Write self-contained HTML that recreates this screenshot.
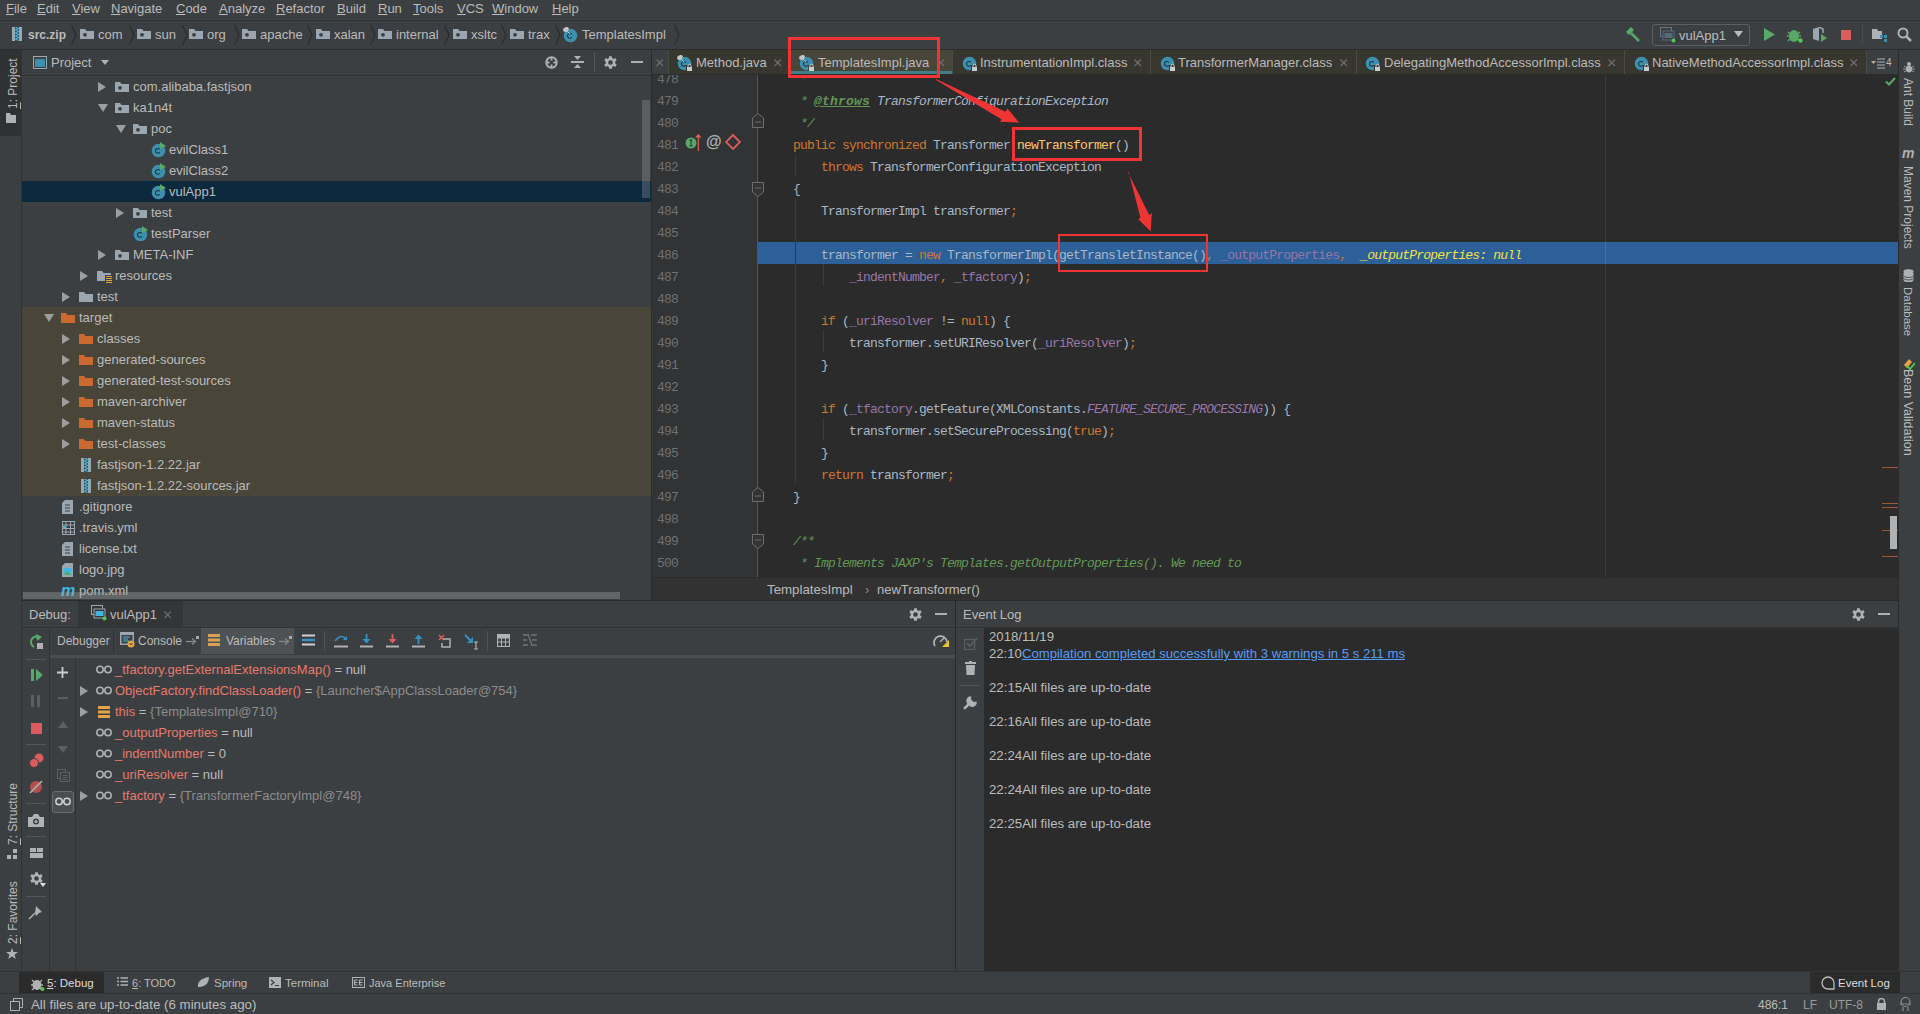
<!DOCTYPE html><html><head><meta charset="utf-8"><style>
html,body{margin:0;padding:0;}
body{width:1920px;height:1014px;overflow:hidden;position:relative;background:#3C3F41;font-family:"Liberation Sans",sans-serif;}
.t{position:absolute;white-space:pre;font-family:"Liberation Sans",sans-serif;}
.m{position:absolute;white-space:pre;font-family:"Liberation Mono",monospace;font-size:13px;letter-spacing:-0.8px;line-height:22px;color:#A9B7C6;}
.u{text-decoration:underline;}
</style></head><body>
<div style="position:absolute;left:0px;top:0px;width:1920px;height:20px;background:#3C3F41;"></div>
<div style="position:absolute;left:0px;top:20px;width:1920px;height:1px;background:#323232;"></div>
<div class="t" style="left:6px;top:1.0px;color:#BBBBBB;font-size:13px;line-height:16px;"><span class="u">F</span>ile</div>
<div class="t" style="left:37px;top:1.0px;color:#BBBBBB;font-size:13px;line-height:16px;"><span class="u">E</span>dit</div>
<div class="t" style="left:72px;top:1.0px;color:#BBBBBB;font-size:13px;line-height:16px;"><span class="u">V</span>iew</div>
<div class="t" style="left:111px;top:1.0px;color:#BBBBBB;font-size:13px;line-height:16px;"><span class="u">N</span>avigate</div>
<div class="t" style="left:176px;top:1.0px;color:#BBBBBB;font-size:13px;line-height:16px;"><span class="u">C</span>ode</div>
<div class="t" style="left:219px;top:1.0px;color:#BBBBBB;font-size:13px;line-height:16px;"><span class="u">A</span>nalyze</div>
<div class="t" style="left:276px;top:1.0px;color:#BBBBBB;font-size:13px;line-height:16px;"><span class="u">R</span>efactor</div>
<div class="t" style="left:337px;top:1.0px;color:#BBBBBB;font-size:13px;line-height:16px;"><span class="u">B</span>uild</div>
<div class="t" style="left:378px;top:1.0px;color:#BBBBBB;font-size:13px;line-height:16px;"><span class="u">R</span>un</div>
<div class="t" style="left:413px;top:1.0px;color:#BBBBBB;font-size:13px;line-height:16px;"><span class="u">T</span>ools</div>
<div class="t" style="left:457px;top:1.0px;color:#BBBBBB;font-size:13px;line-height:16px;"><span class="u">V</span>CS</div>
<div class="t" style="left:492px;top:1.0px;color:#BBBBBB;font-size:13px;line-height:16px;"><span class="u">W</span>indow</div>
<div class="t" style="left:552px;top:1.0px;color:#BBBBBB;font-size:13px;line-height:16px;"><span class="u">H</span>elp</div>
<div style="position:absolute;left:0px;top:21px;width:1920px;height:28px;background:#3C3F41;"></div>
<div style="position:absolute;left:0px;top:49px;width:1920px;height:1px;background:#2B2B2B;"></div>
<svg style="position:absolute;left:12px;top:27px;" width="10" height="14" viewBox="0 0 10 14"><rect x="0" y="0" width="10" height="14" fill="#9AA7B0"/><rect x="3" y="0" width="4" height="14" fill="#3C3F41"/><path d="M3.5 0 L6.5 1.5 L3.5 3 L6.5 4.5 L3.5 6 L6.5 7.5 L3.5 9 L6.5 10.5 L3.5 12 L6.5 13.5" stroke="#40B6E0" stroke-width="1.2" fill="none"/></svg>
<div class="t" style="left:28px;top:27.0px;color:#BBBBBB;font-size:12px;line-height:16px;font-weight:bold;">src.zip</div>
<svg style="position:absolute;left:71px;top:25px;" width="6" height="20" viewBox="0 0 6 20"><path d="M0.5 0 L5 10 L0.5 20" stroke="#2B2B2B" stroke-width="1.2" fill="none"/></svg>
<svg style="position:absolute;left:129px;top:25px;" width="6" height="20" viewBox="0 0 6 20"><path d="M0.5 0 L5 10 L0.5 20" stroke="#2B2B2B" stroke-width="1.2" fill="none"/></svg>
<svg style="position:absolute;left:182px;top:25px;" width="6" height="20" viewBox="0 0 6 20"><path d="M0.5 0 L5 10 L0.5 20" stroke="#2B2B2B" stroke-width="1.2" fill="none"/></svg>
<svg style="position:absolute;left:234px;top:25px;" width="6" height="20" viewBox="0 0 6 20"><path d="M0.5 0 L5 10 L0.5 20" stroke="#2B2B2B" stroke-width="1.2" fill="none"/></svg>
<svg style="position:absolute;left:307px;top:25px;" width="6" height="20" viewBox="0 0 6 20"><path d="M0.5 0 L5 10 L0.5 20" stroke="#2B2B2B" stroke-width="1.2" fill="none"/></svg>
<svg style="position:absolute;left:370px;top:25px;" width="6" height="20" viewBox="0 0 6 20"><path d="M0.5 0 L5 10 L0.5 20" stroke="#2B2B2B" stroke-width="1.2" fill="none"/></svg>
<svg style="position:absolute;left:444px;top:25px;" width="6" height="20" viewBox="0 0 6 20"><path d="M0.5 0 L5 10 L0.5 20" stroke="#2B2B2B" stroke-width="1.2" fill="none"/></svg>
<svg style="position:absolute;left:501px;top:25px;" width="6" height="20" viewBox="0 0 6 20"><path d="M0.5 0 L5 10 L0.5 20" stroke="#2B2B2B" stroke-width="1.2" fill="none"/></svg>
<svg style="position:absolute;left:555px;top:25px;" width="6" height="20" viewBox="0 0 6 20"><path d="M0.5 0 L5 10 L0.5 20" stroke="#2B2B2B" stroke-width="1.2" fill="none"/></svg>
<svg style="position:absolute;left:674px;top:25px;" width="6" height="20" viewBox="0 0 6 20"><path d="M0.5 0 L5 10 L0.5 20" stroke="#2B2B2B" stroke-width="1.2" fill="none"/></svg>
<svg style="position:absolute;left:80px;top:28px;" width="14" height="11" viewBox="0 0 14 11"><path d="M0 1 H5 L6.5 3 H14 V11 H0 Z" fill="#9AA7B0"/><circle cx="5" cy="6.8" r="1.9" fill="#3C3F41"/></svg>
<div class="t" style="left:98px;top:27.0px;color:#BBBBBB;font-size:13px;line-height:16px;">com</div>
<svg style="position:absolute;left:137px;top:28px;" width="14" height="11" viewBox="0 0 14 11"><path d="M0 1 H5 L6.5 3 H14 V11 H0 Z" fill="#9AA7B0"/><circle cx="5" cy="6.8" r="1.9" fill="#3C3F41"/></svg>
<div class="t" style="left:155px;top:27.0px;color:#BBBBBB;font-size:13px;line-height:16px;">sun</div>
<svg style="position:absolute;left:189px;top:28px;" width="14" height="11" viewBox="0 0 14 11"><path d="M0 1 H5 L6.5 3 H14 V11 H0 Z" fill="#9AA7B0"/><circle cx="5" cy="6.8" r="1.9" fill="#3C3F41"/></svg>
<div class="t" style="left:207px;top:27.0px;color:#BBBBBB;font-size:13px;line-height:16px;">org</div>
<svg style="position:absolute;left:242px;top:28px;" width="14" height="11" viewBox="0 0 14 11"><path d="M0 1 H5 L6.5 3 H14 V11 H0 Z" fill="#9AA7B0"/><circle cx="5" cy="6.8" r="1.9" fill="#3C3F41"/></svg>
<div class="t" style="left:260px;top:27.0px;color:#BBBBBB;font-size:13px;line-height:16px;">apache</div>
<svg style="position:absolute;left:316px;top:28px;" width="14" height="11" viewBox="0 0 14 11"><path d="M0 1 H5 L6.5 3 H14 V11 H0 Z" fill="#9AA7B0"/><circle cx="5" cy="6.8" r="1.9" fill="#3C3F41"/></svg>
<div class="t" style="left:334px;top:27.0px;color:#BBBBBB;font-size:13px;line-height:16px;">xalan</div>
<svg style="position:absolute;left:378px;top:28px;" width="14" height="11" viewBox="0 0 14 11"><path d="M0 1 H5 L6.5 3 H14 V11 H0 Z" fill="#9AA7B0"/><circle cx="5" cy="6.8" r="1.9" fill="#3C3F41"/></svg>
<div class="t" style="left:396px;top:27.0px;color:#BBBBBB;font-size:13px;line-height:16px;">internal</div>
<svg style="position:absolute;left:453px;top:28px;" width="14" height="11" viewBox="0 0 14 11"><path d="M0 1 H5 L6.5 3 H14 V11 H0 Z" fill="#9AA7B0"/><circle cx="5" cy="6.8" r="1.9" fill="#3C3F41"/></svg>
<div class="t" style="left:471px;top:27.0px;color:#BBBBBB;font-size:13px;line-height:16px;">xsltc</div>
<svg style="position:absolute;left:510px;top:28px;" width="14" height="11" viewBox="0 0 14 11"><path d="M0 1 H5 L6.5 3 H14 V11 H0 Z" fill="#9AA7B0"/><circle cx="5" cy="6.8" r="1.9" fill="#3C3F41"/></svg>
<div class="t" style="left:528px;top:27.0px;color:#BBBBBB;font-size:13px;line-height:16px;">trax</div>
<svg style="position:absolute;left:563px;top:27px;" width="16" height="16" viewBox="0 0 16 16"><circle cx="7.5" cy="8.5" r="6.8" fill="#3D8FAE"/><path d="M8.8 7.4 A2.4 2.4 0 1 0 8.8 10.4" stroke="#1B3440" stroke-width="1.1" fill="none"/><ellipse cx="3" cy="2.5" rx="3" ry="2.2" fill="#C0C5C8" transform="rotate(-30 3 2.5)"/><path d="M4 4 L7 7" stroke="#C0C5C8" stroke-width="1"/></svg>
<div class="t" style="left:582px;top:27.0px;color:#BBBBBB;font-size:13px;line-height:16px;">TemplatesImpl</div>
<svg style="position:absolute;left:1625px;top:27px;" width="16" height="15" viewBox="0 0 16 15"><path d="M1 5 L6 0 L9 3 L4 8 Z" fill="#59A869"/><path d="M6 6 L14 14" stroke="#59A869" stroke-width="2.5"/></svg>
<div style="position:absolute;left:1652px;top:24px;width:96px;height:20px;border:1px solid #5E6060;border-radius:3px;"></div>
<svg style="position:absolute;left:1660px;top:27px;" width="16" height="16" viewBox="0 0 16 16"><rect x="0.5" y="0.5" width="11" height="9" fill="none" stroke="#6E7578"/><rect x="3" y="4" width="11" height="9" fill="#3C3F41" stroke="#4E6A80"/><rect x="4.5" y="6" width="8" height="5" fill="#56687A"/><circle cx="13.5" cy="13.5" r="2" fill="#4ECB4E"/></svg>
<div class="t" style="left:1679px;top:28.0px;color:#BBBBBB;font-size:13px;line-height:16px;">vulApp1</div>
<svg style="position:absolute;left:1734px;top:31px;" width="9" height="6" viewBox="0 0 9 6"><path d="M0 0 L9 0 L4.5 6 Z" fill="#BBBBBB"/></svg>
<svg style="position:absolute;left:1764px;top:28px;" width="11" height="13" viewBox="0 0 11 13"><path d="M0 0 L11 6.5 L0 13 Z" fill="#59A869"/></svg>
<svg style="position:absolute;left:1787px;top:27px;" width="16" height="16" viewBox="0 0 16 16"><ellipse cx="7" cy="9" rx="5" ry="6" fill="#59A869"/><path d="M1 5 L3 7 M13 5 L11 7 M0 9 H2 M12 9 H14 M1 14 L3 12 M13 14 L11 12" stroke="#59A869" stroke-width="1.5"/><circle cx="13.5" cy="13.5" r="2.2" fill="#4ECB4E"/></svg>
<svg style="position:absolute;left:1812px;top:27px;" width="16" height="16" viewBox="0 0 16 16"><path d="M1 2 L7 0 L7 14 L1 12 Z" fill="#9AA7B0"/><path d="M7 0 L11 2 L11 6" stroke="#9AA7B0" stroke-width="1.5" fill="none"/><path d="M9 7 L15 11 L9 15 Z" fill="#59A869"/></svg>
<div style="position:absolute;left:1841px;top:30px;width:10px;height:10px;background:#DB5C5C;"></div>
<div style="position:absolute;left:1862px;top:25px;width:1px;height:19px;background:#4A4C4E;"></div>
<svg style="position:absolute;left:1872px;top:27px;" width="16" height="16" viewBox="0 0 16 16"><path d="M0 2 H5 L6 4 H10 V12 H0 Z" fill="#AFB1B3"/><rect x="8" y="8" width="3" height="3" fill="#3D8FAE"/><rect x="12" y="8" width="3" height="3" fill="#3D8FAE"/><rect x="12" y="12" width="3" height="3" fill="#3D8FAE"/></svg>
<svg style="position:absolute;left:1897px;top:27px;" width="16" height="16" viewBox="0 0 16 16"><circle cx="6" cy="6" r="4.5" stroke="#AFB1B3" stroke-width="2" fill="none"/><path d="M9.5 9.5 L14 14" stroke="#AFB1B3" stroke-width="2.5"/></svg>
<div style="position:absolute;left:0px;top:50px;width:21px;height:944px;background:#3C3F41;"></div>
<div style="position:absolute;left:21px;top:50px;width:1px;height:922px;background:#323232;"></div>
<div style="position:absolute;left:0px;top:50px;width:21px;height:86px;background:#2F3133;"></div>
<div class="t" style="left:5px;top:59px;width:16px;height:50px;font-size:12px;color:#BBBBBB;writing-mode:vertical-rl;transform:rotate(180deg);line-height:16px;"><span class="u">1</span>: Project</div>
<svg style="position:absolute;left:6px;top:113px;" width="11" height="10" viewBox="0 0 11 10"><path d="M0 0 H4 L5 2 H10 V10 H0 Z" fill="#AFB1B3"/></svg>
<div class="t" style="left:5px;top:783px;width:16px;height:62px;font-size:12px;color:#BBBBBB;writing-mode:vertical-rl;transform:rotate(180deg);line-height:16px;"><span class="u">7</span>: Structure</div>
<svg style="position:absolute;left:7px;top:849px;" width="10" height="10" viewBox="0 0 10 10"><rect x="0" y="6" width="4" height="4" fill="#AFB1B3"/><rect x="6" y="6" width="4" height="4" fill="#AFB1B3"/><rect x="6" y="0" width="4" height="4" fill="#AFB1B3"/></svg>
<div class="t" style="left:5px;top:883px;width:16px;height:61px;font-size:12px;color:#BBBBBB;writing-mode:vertical-rl;transform:rotate(180deg);line-height:16px;"><span class="u">2</span>: Favorites</div>
<svg style="position:absolute;left:6px;top:948px;" width="12" height="11" viewBox="0 0 12 11"><path d="M6 0 L7.5 4 L12 4 L8.5 6.8 L9.8 11 L6 8.5 L2.2 11 L3.5 6.8 L0 4 L4.5 4 Z" fill="#AFB1B3"/></svg>
<div style="position:absolute;left:22px;top:50px;width:629px;height:25px;background:#3C3F41;"></div>
<div style="position:absolute;left:22px;top:75px;width:629px;height:1px;background:#323232;"></div>
<svg style="position:absolute;left:33px;top:56px;" width="14" height="13" viewBox="0 0 14 13"><rect x="0.5" y="0.5" width="13" height="12" fill="none" stroke="#9AA7B0"/><rect x="2" y="3" width="10" height="8" fill="#3D8FAE"/></svg>
<div class="t" style="left:51px;top:55.0px;color:#BBBBBB;font-size:13px;line-height:16px;">Project</div>
<svg style="position:absolute;left:101px;top:60px;" width="8" height="5" viewBox="0 0 8 5"><path d="M0 0 L8 0 L4 5 Z" fill="#AFB1B3"/></svg>
<svg style="position:absolute;left:545px;top:56px;" width="13" height="13" viewBox="0 0 13 13"><circle cx="6.5" cy="6.5" r="5.3" stroke="#AFB1B3" stroke-width="1.8" fill="none"/><path d="M6.5 1 V4.5 M6.5 8.5 V12 M1 6.5 H4.5 M8.5 6.5 H12" stroke="#AFB1B3" stroke-width="2"/></svg>
<svg style="position:absolute;left:571px;top:55px;" width="13" height="14" viewBox="0 0 13 14"><path d="M0 7 H13" stroke="#AFB1B3" stroke-width="2"/><path d="M3 1 L10 1 L6.5 5 Z M3 13 L6.5 9 L10 13 Z" fill="#AFB1B3"/></svg>
<div style="position:absolute;left:594px;top:52px;width:1px;height:20px;background:#55585A;"></div>
<svg style="position:absolute;left:604px;top:56px;" width="13" height="13" viewBox="0 0 13 13"><path d="M5.08 0.16 L7.92 0.16 L8.03 1.94 L9.68 2.89 L11.28 2.10 L12.70 4.56 L11.22 5.55 L11.22 7.45 L12.70 8.44 L11.28 10.90 L9.68 10.11 L8.03 11.06 L7.92 12.84 L5.08 12.84 L4.97 11.06 L3.32 10.11 L1.72 10.90 L0.30 8.44 L1.78 7.45 L1.78 5.55 L0.30 4.56 L1.72 2.10 L3.32 2.89 L4.97 1.94 Z M8.84 6.50 A2.34 2.34 0 1 0 4.16 6.50 A2.34 2.34 0 1 0 8.84 6.50 Z" fill="#AFB1B3" fill-rule="evenodd"/></svg>
<div style="position:absolute;left:631px;top:61px;width:12px;height:2px;background:#AFB1B3;"></div>
<div style="position:absolute;left:22px;top:76px;width:629px;height:516px;background:#3C3F41;"></div>
<div style="position:absolute;left:22px;top:181px;width:629px;height:21px;background:#0D293E;"></div>
<div style="position:absolute;left:22px;top:307px;width:629px;height:189px;background:#494539;"></div>
<svg style="position:absolute;left:98px;top:81.5px;" width="9" height="10" viewBox="0 0 9 10"><path d="M0 0 L8 5 L0 10 Z" fill="#9E9E9E"/></svg>
<svg style="position:absolute;left:115px;top:80.5px;" width="14" height="11" viewBox="0 0 14 11"><path d="M0 1 H5 L6.5 3 H14 V11 H0 Z" fill="#9AA7B0"/><circle cx="5" cy="6.8" r="1.9" fill="#3C3F41"/></svg>
<div class="t" style="left:133px;top:78.5px;color:#BBBBBB;font-size:13px;line-height:16px;">com.alibaba.fastjson</div>
<svg style="position:absolute;left:98px;top:103.5px;" width="10" height="9" viewBox="0 0 10 9"><path d="M0 0 L10 0 L5 8 Z" fill="#9E9E9E"/></svg>
<svg style="position:absolute;left:115px;top:101.5px;" width="14" height="11" viewBox="0 0 14 11"><path d="M0 1 H5 L6.5 3 H14 V11 H0 Z" fill="#9AA7B0"/><circle cx="5" cy="6.8" r="1.9" fill="#3C3F41"/></svg>
<div class="t" style="left:133px;top:99.5px;color:#BBBBBB;font-size:13px;line-height:16px;">ka1n4t</div>
<svg style="position:absolute;left:116px;top:124.5px;" width="10" height="9" viewBox="0 0 10 9"><path d="M0 0 L10 0 L5 8 Z" fill="#9E9E9E"/></svg>
<svg style="position:absolute;left:133px;top:122.5px;" width="14" height="11" viewBox="0 0 14 11"><path d="M0 1 H5 L6.5 3 H14 V11 H0 Z" fill="#9AA7B0"/><circle cx="5" cy="6.8" r="1.9" fill="#3C3F41"/></svg>
<div class="t" style="left:151px;top:120.5px;color:#BBBBBB;font-size:13px;line-height:16px;">poc</div>
<svg style="position:absolute;left:151px;top:141.5px;" width="16" height="16" viewBox="0 0 16 16"><circle cx="7.5" cy="8.5" r="6.8" fill="#3D8FAE"/><path d="M8.8 7.4 A2.4 2.4 0 1 0 8.8 10.4" stroke="#1B3440" stroke-width="1.1" fill="none"/><path d="M9 0 L15 4 L9 7 Z" fill="#59A869"/></svg>
<div class="t" style="left:169px;top:141.5px;color:#BBBBBB;font-size:13px;line-height:16px;">evilClass1</div>
<svg style="position:absolute;left:151px;top:162.5px;" width="16" height="16" viewBox="0 0 16 16"><circle cx="7.5" cy="8.5" r="6.8" fill="#3D8FAE"/><path d="M8.8 7.4 A2.4 2.4 0 1 0 8.8 10.4" stroke="#1B3440" stroke-width="1.1" fill="none"/><path d="M9 0 L15 4 L9 7 Z" fill="#59A869"/></svg>
<div class="t" style="left:169px;top:162.5px;color:#BBBBBB;font-size:13px;line-height:16px;">evilClass2</div>
<svg style="position:absolute;left:151px;top:183.5px;" width="16" height="16" viewBox="0 0 16 16"><circle cx="7.5" cy="8.5" r="6.8" fill="#3D8FAE"/><path d="M8.8 7.4 A2.4 2.4 0 1 0 8.8 10.4" stroke="#1B3440" stroke-width="1.1" fill="none"/><path d="M9 0 L15 4 L9 7 Z" fill="#59A869"/></svg>
<div class="t" style="left:169px;top:183.5px;color:#BBBBBB;font-size:13px;line-height:16px;">vulApp1</div>
<svg style="position:absolute;left:116px;top:207.5px;" width="9" height="10" viewBox="0 0 9 10"><path d="M0 0 L8 5 L0 10 Z" fill="#9E9E9E"/></svg>
<svg style="position:absolute;left:133px;top:206.5px;" width="14" height="11" viewBox="0 0 14 11"><path d="M0 1 H5 L6.5 3 H14 V11 H0 Z" fill="#9AA7B0"/><circle cx="5" cy="6.8" r="1.9" fill="#3C3F41"/></svg>
<div class="t" style="left:151px;top:204.5px;color:#BBBBBB;font-size:13px;line-height:16px;">test</div>
<svg style="position:absolute;left:133px;top:225.5px;" width="16" height="16" viewBox="0 0 16 16"><circle cx="7.5" cy="8.5" r="6.8" fill="#3D8FAE"/><path d="M8.8 7.4 A2.4 2.4 0 1 0 8.8 10.4" stroke="#1B3440" stroke-width="1.1" fill="none"/><path d="M9 0 L15 4 L9 7 Z" fill="#59A869"/></svg>
<div class="t" style="left:151px;top:225.5px;color:#BBBBBB;font-size:13px;line-height:16px;">testParser</div>
<svg style="position:absolute;left:98px;top:249.5px;" width="9" height="10" viewBox="0 0 9 10"><path d="M0 0 L8 5 L0 10 Z" fill="#9E9E9E"/></svg>
<svg style="position:absolute;left:115px;top:248.5px;" width="14" height="11" viewBox="0 0 14 11"><path d="M0 1 H5 L6.5 3 H14 V11 H0 Z" fill="#9AA7B0"/><circle cx="5" cy="6.8" r="1.9" fill="#3C3F41"/></svg>
<div class="t" style="left:133px;top:246.5px;color:#BBBBBB;font-size:13px;line-height:16px;">META-INF</div>
<svg style="position:absolute;left:80px;top:270.5px;" width="9" height="10" viewBox="0 0 9 10"><path d="M0 0 L8 5 L0 10 Z" fill="#9E9E9E"/></svg>
<svg style="position:absolute;left:97px;top:269.5px;" width="14" height="11" viewBox="0 0 14 11"><path d="M0 1 H5 L6.5 3 H14 V11 H0 Z" fill="#9AA7B0"/></svg>
<svg style="position:absolute;left:105px;top:274.5px;" width="7" height="8" viewBox="0 0 7 8"><rect x="0" y="0" width="7" height="8" fill="#3C3F41"/><path d="M1 1.5 H7 M1 3.5 H7 M1 5.5 H7 M1 7.5 H7" stroke="#E4A445" stroke-width="1"/></svg>
<div class="t" style="left:115px;top:267.5px;color:#BBBBBB;font-size:13px;line-height:16px;">resources</div>
<svg style="position:absolute;left:62px;top:291.5px;" width="9" height="10" viewBox="0 0 9 10"><path d="M0 0 L8 5 L0 10 Z" fill="#9E9E9E"/></svg>
<svg style="position:absolute;left:79px;top:290.5px;" width="14" height="11" viewBox="0 0 14 11"><path d="M0 1 H5 L6.5 3 H14 V11 H0 Z" fill="#9AA7B0"/></svg>
<div class="t" style="left:97px;top:288.5px;color:#BBBBBB;font-size:13px;line-height:16px;">test</div>
<svg style="position:absolute;left:44px;top:313.5px;" width="10" height="9" viewBox="0 0 10 9"><path d="M0 0 L10 0 L5 8 Z" fill="#9E9E9E"/></svg>
<svg style="position:absolute;left:61px;top:311.5px;" width="14" height="11" viewBox="0 0 14 11"><path d="M0 1 H5 L6.5 3 H14 V11 H0 Z" fill="#CB6A30"/></svg>
<div class="t" style="left:79px;top:309.5px;color:#BBBBBB;font-size:13px;line-height:16px;">target</div>
<svg style="position:absolute;left:62px;top:333.5px;" width="9" height="10" viewBox="0 0 9 10"><path d="M0 0 L8 5 L0 10 Z" fill="#9E9E9E"/></svg>
<svg style="position:absolute;left:79px;top:332.5px;" width="14" height="11" viewBox="0 0 14 11"><path d="M0 1 H5 L6.5 3 H14 V11 H0 Z" fill="#CB6A30"/></svg>
<div class="t" style="left:97px;top:330.5px;color:#BBBBBB;font-size:13px;line-height:16px;">classes</div>
<svg style="position:absolute;left:62px;top:354.5px;" width="9" height="10" viewBox="0 0 9 10"><path d="M0 0 L8 5 L0 10 Z" fill="#9E9E9E"/></svg>
<svg style="position:absolute;left:79px;top:353.5px;" width="14" height="11" viewBox="0 0 14 11"><path d="M0 1 H5 L6.5 3 H14 V11 H0 Z" fill="#CB6A30"/></svg>
<div class="t" style="left:97px;top:351.5px;color:#BBBBBB;font-size:13px;line-height:16px;">generated-sources</div>
<svg style="position:absolute;left:62px;top:375.5px;" width="9" height="10" viewBox="0 0 9 10"><path d="M0 0 L8 5 L0 10 Z" fill="#9E9E9E"/></svg>
<svg style="position:absolute;left:79px;top:374.5px;" width="14" height="11" viewBox="0 0 14 11"><path d="M0 1 H5 L6.5 3 H14 V11 H0 Z" fill="#CB6A30"/></svg>
<div class="t" style="left:97px;top:372.5px;color:#BBBBBB;font-size:13px;line-height:16px;">generated-test-sources</div>
<svg style="position:absolute;left:62px;top:396.5px;" width="9" height="10" viewBox="0 0 9 10"><path d="M0 0 L8 5 L0 10 Z" fill="#9E9E9E"/></svg>
<svg style="position:absolute;left:79px;top:395.5px;" width="14" height="11" viewBox="0 0 14 11"><path d="M0 1 H5 L6.5 3 H14 V11 H0 Z" fill="#CB6A30"/></svg>
<div class="t" style="left:97px;top:393.5px;color:#BBBBBB;font-size:13px;line-height:16px;">maven-archiver</div>
<svg style="position:absolute;left:62px;top:417.5px;" width="9" height="10" viewBox="0 0 9 10"><path d="M0 0 L8 5 L0 10 Z" fill="#9E9E9E"/></svg>
<svg style="position:absolute;left:79px;top:416.5px;" width="14" height="11" viewBox="0 0 14 11"><path d="M0 1 H5 L6.5 3 H14 V11 H0 Z" fill="#CB6A30"/></svg>
<div class="t" style="left:97px;top:414.5px;color:#BBBBBB;font-size:13px;line-height:16px;">maven-status</div>
<svg style="position:absolute;left:62px;top:438.5px;" width="9" height="10" viewBox="0 0 9 10"><path d="M0 0 L8 5 L0 10 Z" fill="#9E9E9E"/></svg>
<svg style="position:absolute;left:79px;top:437.5px;" width="14" height="11" viewBox="0 0 14 11"><path d="M0 1 H5 L6.5 3 H14 V11 H0 Z" fill="#CB6A30"/></svg>
<div class="t" style="left:97px;top:435.5px;color:#BBBBBB;font-size:13px;line-height:16px;">test-classes</div>
<svg style="position:absolute;left:81px;top:457.5px;" width="10" height="14" viewBox="0 0 10 14"><rect x="0" y="0" width="10" height="14" fill="#9AA7B0"/><rect x="3" y="0" width="4" height="14" fill="#494539"/><path d="M3.5 0 L6.5 1.5 L3.5 3 L6.5 4.5 L3.5 6 L6.5 7.5 L3.5 9 L6.5 10.5 L3.5 12 L6.5 13.5" stroke="#40B6E0" stroke-width="1.2" fill="none"/></svg>
<div class="t" style="left:97px;top:456.5px;color:#BBBBBB;font-size:13px;line-height:16px;">fastjson-1.2.22.jar</div>
<svg style="position:absolute;left:81px;top:478.5px;" width="10" height="14" viewBox="0 0 10 14"><rect x="0" y="0" width="10" height="14" fill="#9AA7B0"/><rect x="3" y="0" width="4" height="14" fill="#494539"/><path d="M3.5 0 L6.5 1.5 L3.5 3 L6.5 4.5 L3.5 6 L6.5 7.5 L3.5 9 L6.5 10.5 L3.5 12 L6.5 13.5" stroke="#40B6E0" stroke-width="1.2" fill="none"/></svg>
<div class="t" style="left:97px;top:477.5px;color:#BBBBBB;font-size:13px;line-height:16px;">fastjson-1.2.22-sources.jar</div>
<svg style="position:absolute;left:62px;top:499.5px;" width="11" height="14" viewBox="0 0 11 14"><path d="M3 0 H11 V14 H0 V3 Z" fill="#9AA7B0"/><path d="M3 5 H8 M3 8 H8 M3 11 H8" stroke="#3C3F41" stroke-width="1"/></svg>
<div class="t" style="left:79px;top:498.5px;color:#BBBBBB;font-size:13px;line-height:16px;">.gitignore</div>
<svg style="position:absolute;left:62px;top:520.5px;" width="13" height="14" viewBox="0 0 13 14"><rect x="0.5" y="0.5" width="12" height="13" fill="none" stroke="#9AA7B0"/><path d="M0 4 H13 M0 7.5 H13 M0 11 H13 M4 0 V14 M8.5 0 V14" stroke="#9AA7B0" stroke-width="1"/><rect x="1" y="5" width="3" height="2" fill="#40B6E0"/></svg>
<div class="t" style="left:79px;top:519.5px;color:#BBBBBB;font-size:13px;line-height:16px;">.travis.yml</div>
<svg style="position:absolute;left:62px;top:541.5px;" width="11" height="14" viewBox="0 0 11 14"><path d="M3 0 H11 V14 H0 V3 Z" fill="#9AA7B0"/><path d="M3 5 H8 M3 8 H8 M3 11 H8" stroke="#3C3F41" stroke-width="1"/></svg>
<div class="t" style="left:79px;top:540.5px;color:#BBBBBB;font-size:13px;line-height:16px;">license.txt</div>
<svg style="position:absolute;left:62px;top:562.5px;" width="11" height="14" viewBox="0 0 11 14"><path d="M3 0 H11 V14 H0 V3 Z" fill="#9AA7B0"/><rect x="1.5" y="5" width="8" height="7" fill="#40B6E0"/><path d="M1.5 12 L5 8 L9.5 12 Z" fill="#59A869"/></svg>
<div class="t" style="left:79px;top:561.5px;color:#BBBBBB;font-size:13px;line-height:16px;">logo.jpg</div>
<div class="t" style="left:61px;top:582.5px;color:#40B6E0;font-size:16px;line-height:16px;font-style:italic;font-weight:bold;">m</div>
<div class="t" style="left:79px;top:582.5px;color:#BBBBBB;font-size:13px;line-height:16px;">pom.xml</div>
<div style="position:absolute;left:23px;top:592px;width:597px;height:7px;background:rgba(165,168,170,0.36);"></div>
<div style="position:absolute;left:642px;top:100px;width:8px;height:98px;background:rgba(170,175,180,0.28);"></div>
<div style="position:absolute;left:651px;top:50px;width:1px;height:550px;background:#2B2B2B;"></div>
<div style="position:absolute;left:652px;top:50px;width:1246px;height:25px;background:#3C3F41;"></div>
<div style="position:absolute;left:652px;top:74px;width:1246px;height:1px;background:#2B2B2B;"></div>
<svg style="position:absolute;left:656.25px;top:59.25px;" width="7.5" height="7.5" viewBox="0 0 7.5 7.5"><path d="M0.5 0.5 L7.0 7.0 M7.0 0.5 L0.5 7.0" stroke="#6E6E6E" stroke-width="1.2"/></svg>
<div style="position:absolute;left:669px;top:50px;width:120px;height:24px;background:#37362F;"></div>
<svg style="position:absolute;left:677px;top:55px;" width="16" height="16" viewBox="0 0 16 16"><circle cx="7.5" cy="8.5" r="6.8" fill="#3D8FAE"/><path d="M8.8 7.4 A2.4 2.4 0 1 0 8.8 10.4" stroke="#1B3440" stroke-width="1.1" fill="none"/><ellipse cx="3" cy="2.5" rx="3" ry="2.2" fill="#C0C5C8" transform="rotate(-30 3 2.5)"/><path d="M4 4 L7 7" stroke="#C0C5C8" stroke-width="1"/><rect x="9" y="10" width="6" height="6" fill="#37362F"/><rect x="10" y="12" width="5" height="4" fill="#C9CDD0"/><path d="M11 12 V10.8 A1.5 1.5 0 0 1 14 10.8 V12" stroke="#C9CDD0" stroke-width="1" fill="none"/></svg>
<div class="t" style="left:696px;top:55.0px;color:#BBBBBB;font-size:13px;line-height:16px;">Method.java</div>
<svg style="position:absolute;left:774.25px;top:59.25px;" width="7.5" height="7.5" viewBox="0 0 7.5 7.5"><path d="M0.5 0.5 L7.0 7.0 M7.0 0.5 L0.5 7.0" stroke="#6E6E6E" stroke-width="1.2"/></svg>
<div style="position:absolute;left:789px;top:50px;width:163px;height:24px;background:#48453A;"></div>
<svg style="position:absolute;left:799px;top:55px;" width="16" height="16" viewBox="0 0 16 16"><circle cx="7.5" cy="8.5" r="6.8" fill="#3D8FAE"/><path d="M8.8 7.4 A2.4 2.4 0 1 0 8.8 10.4" stroke="#1B3440" stroke-width="1.1" fill="none"/><ellipse cx="3" cy="2.5" rx="3" ry="2.2" fill="#C0C5C8" transform="rotate(-30 3 2.5)"/><path d="M4 4 L7 7" stroke="#C0C5C8" stroke-width="1"/><rect x="9" y="10" width="6" height="6" fill="#48453A"/><rect x="10" y="12" width="5" height="4" fill="#C9CDD0"/><path d="M11 12 V10.8 A1.5 1.5 0 0 1 14 10.8 V12" stroke="#C9CDD0" stroke-width="1" fill="none"/></svg>
<div class="t" style="left:818px;top:55.0px;color:#BBBBBB;font-size:13px;line-height:16px;">TemplatesImpl.java</div>
<svg style="position:absolute;left:937.25px;top:59.25px;" width="7.5" height="7.5" viewBox="0 0 7.5 7.5"><path d="M0.5 0.5 L7.0 7.0 M7.0 0.5 L0.5 7.0" stroke="#6E6E6E" stroke-width="1.2"/></svg>
<div style="position:absolute;left:789px;top:71px;width:163px;height:3px;background:#3F7F86;"></div>
<div style="position:absolute;left:952px;top:50px;width:198px;height:24px;background:#37362F;"></div>
<svg style="position:absolute;left:962px;top:55px;" width="16" height="16" viewBox="0 0 16 16"><circle cx="7.5" cy="8.5" r="6.8" fill="#3D8FAE"/><path d="M8.8 7.4 A2.4 2.4 0 1 0 8.8 10.4" stroke="#1B3440" stroke-width="1.1" fill="none"/><rect x="9" y="10" width="6" height="6" fill="#37362F"/><rect x="10" y="12" width="5" height="4" fill="#C9CDD0"/><path d="M11 12 V10.8 A1.5 1.5 0 0 1 14 10.8 V12" stroke="#C9CDD0" stroke-width="1" fill="none"/></svg>
<div class="t" style="left:980px;top:55.0px;color:#BBBBBB;font-size:13px;line-height:16px;">InstrumentationImpl.class</div>
<svg style="position:absolute;left:1134.25px;top:59.25px;" width="7.5" height="7.5" viewBox="0 0 7.5 7.5"><path d="M0.5 0.5 L7.0 7.0 M7.0 0.5 L0.5 7.0" stroke="#6E6E6E" stroke-width="1.2"/></svg>
<div style="position:absolute;left:1150px;top:50px;width:206px;height:24px;background:#37362F;"></div>
<svg style="position:absolute;left:1160px;top:55px;" width="16" height="16" viewBox="0 0 16 16"><circle cx="7.5" cy="8.5" r="6.8" fill="#3D8FAE"/><path d="M8.8 7.4 A2.4 2.4 0 1 0 8.8 10.4" stroke="#1B3440" stroke-width="1.1" fill="none"/><rect x="9" y="10" width="6" height="6" fill="#37362F"/><rect x="10" y="12" width="5" height="4" fill="#C9CDD0"/><path d="M11 12 V10.8 A1.5 1.5 0 0 1 14 10.8 V12" stroke="#C9CDD0" stroke-width="1" fill="none"/></svg>
<div class="t" style="left:1178px;top:55.0px;color:#BBBBBB;font-size:13px;line-height:16px;">TransformerManager.class</div>
<svg style="position:absolute;left:1340.25px;top:59.25px;" width="7.5" height="7.5" viewBox="0 0 7.5 7.5"><path d="M0.5 0.5 L7.0 7.0 M7.0 0.5 L0.5 7.0" stroke="#6E6E6E" stroke-width="1.2"/></svg>
<div style="position:absolute;left:1356px;top:50px;width:268px;height:24px;background:#37362F;"></div>
<svg style="position:absolute;left:1365px;top:55px;" width="16" height="16" viewBox="0 0 16 16"><circle cx="7.5" cy="8.5" r="6.8" fill="#3D8FAE"/><path d="M8.8 7.4 A2.4 2.4 0 1 0 8.8 10.4" stroke="#1B3440" stroke-width="1.1" fill="none"/><rect x="9" y="10" width="6" height="6" fill="#37362F"/><rect x="10" y="12" width="5" height="4" fill="#C9CDD0"/><path d="M11 12 V10.8 A1.5 1.5 0 0 1 14 10.8 V12" stroke="#C9CDD0" stroke-width="1" fill="none"/></svg>
<div class="t" style="left:1384px;top:55.0px;color:#BBBBBB;font-size:13px;line-height:16px;">DelegatingMethodAccessorImpl.class</div>
<svg style="position:absolute;left:1608.25px;top:59.25px;" width="7.5" height="7.5" viewBox="0 0 7.5 7.5"><path d="M0.5 0.5 L7.0 7.0 M7.0 0.5 L0.5 7.0" stroke="#6E6E6E" stroke-width="1.2"/></svg>
<div style="position:absolute;left:1624px;top:50px;width:242px;height:24px;background:#37362F;"></div>
<svg style="position:absolute;left:1634px;top:55px;" width="16" height="16" viewBox="0 0 16 16"><circle cx="7.5" cy="8.5" r="6.8" fill="#3D8FAE"/><path d="M8.8 7.4 A2.4 2.4 0 1 0 8.8 10.4" stroke="#1B3440" stroke-width="1.1" fill="none"/><rect x="9" y="10" width="6" height="6" fill="#37362F"/><rect x="10" y="12" width="5" height="4" fill="#C9CDD0"/><path d="M11 12 V10.8 A1.5 1.5 0 0 1 14 10.8 V12" stroke="#C9CDD0" stroke-width="1" fill="none"/></svg>
<div class="t" style="left:1652px;top:55.0px;color:#BBBBBB;font-size:13px;line-height:16px;">NativeMethodAccessorImpl.class</div>
<svg style="position:absolute;left:1850.25px;top:59.25px;" width="7.5" height="7.5" viewBox="0 0 7.5 7.5"><path d="M0.5 0.5 L7.0 7.0 M7.0 0.5 L0.5 7.0" stroke="#6E6E6E" stroke-width="1.2"/></svg>
<div style="position:absolute;left:789px;top:50px;width:1px;height:24px;background:#4A4A47;"></div>
<div style="position:absolute;left:952px;top:50px;width:1px;height:24px;background:#4A4A47;"></div>
<div style="position:absolute;left:1150px;top:50px;width:1px;height:24px;background:#4A4A47;"></div>
<div style="position:absolute;left:1356px;top:50px;width:1px;height:24px;background:#4A4A47;"></div>
<div style="position:absolute;left:1624px;top:50px;width:1px;height:24px;background:#4A4A47;"></div>
<div style="position:absolute;left:1866px;top:50px;width:1px;height:24px;background:#4A4A47;"></div>
<div style="position:absolute;left:668px;top:50px;width:1px;height:24px;background:#4A4A47;"></div>
<svg style="position:absolute;left:1871px;top:58px;" width="22" height="11" viewBox="0 0 22 11"><path d="M0 3 L5 3 L2.5 6 Z" fill="#AFB1B3"/><path d="M6 1 H14 M6 4 H14 M6 7 H14 M6 10 H14" stroke="#AFB1B3" stroke-width="1.2"/></svg>
<div class="t" style="left:1886px;top:55.0px;color:#BBBBBB;font-size:10px;line-height:16px;">4</div>
<div style="position:absolute;left:652px;top:75px;width:1246px;height:502px;background:#2B2B2B;"></div>
<div style="position:absolute;left:652px;top:75px;width:105px;height:502px;background:#313335;"></div>
<div style="position:absolute;left:757px;top:75px;width:1px;height:502px;background:#555555;"></div>
<div style="position:absolute;left:1605px;top:75px;width:1px;height:502px;background:#3A3A3A;"></div>
<div style="position:absolute;left:758px;top:242px;width:1140px;height:22px;background:#2D6099;"></div>
<div style="position:absolute;left:1605px;top:242px;width:1px;height:22px;background:#5A6A80;"></div>
<div style="position:absolute;left:652px;top:75px;width:1246px;height:502px;overflow:hidden;">
<div class="m" style="left:5px;top:-6px;color:#6F7173;">478</div>
<div class="m" style="left:113px;top:-6px;"><span style="color:#629755;font-style:italic;">     *</span></div>
<div class="m" style="left:5px;top:16px;color:#6F7173;">479</div>
<div class="m" style="left:113px;top:16px;"><span style="color:#629755;font-style:italic;">     * </span><span style="color:#629755;font-style:italic;font-weight:bold;text-decoration:underline;letter-spacing:0.2px;">@throws</span><span style="color:#A9B7C6;font-style:italic;"> TransformerConfigurationException</span></div>
<div class="m" style="left:5px;top:38px;color:#6F7173;">480</div>
<div class="m" style="left:113px;top:38px;"><span style="color:#629755;font-style:italic;">     */</span></div>
<div class="m" style="left:5px;top:60px;color:#6F7173;">481</div>
<div class="m" style="left:113px;top:60px;"><span style="color:#CC7832;">    public synchronized </span><span style="color:#A9B7C6;">Transformer </span><span style="color:#FFC66D;">newTransformer</span><span style="color:#A9B7C6;">()</span></div>
<div class="m" style="left:5px;top:82px;color:#6F7173;">482</div>
<div class="m" style="left:113px;top:82px;"><span style="color:#CC7832;">        throws </span><span style="color:#A9B7C6;">TransformerConfigurationException</span></div>
<div class="m" style="left:5px;top:104px;color:#6F7173;">483</div>
<div class="m" style="left:113px;top:104px;"><span style="color:#A9B7C6;">    {</span></div>
<div class="m" style="left:5px;top:126px;color:#6F7173;">484</div>
<div class="m" style="left:113px;top:126px;"><span style="color:#A9B7C6;">        TransformerImpl transformer</span><span style="color:#CC7832;">;</span></div>
<div class="m" style="left:5px;top:148px;color:#6F7173;">485</div>
<div class="m" style="left:5px;top:170px;color:#6F7173;">486</div>
<div class="m" style="left:113px;top:170px;"><span style="color:#A9B7C6;">        transformer = </span><span style="color:#CC7832;">new </span><span style="color:#A9B7C6;">TransformerImpl(getTransletInstance()</span><span style="color:#CC7832;">, </span><span style="color:#9876AA;">_outputProperties</span><span style="color:#CC7832;">,</span><span style="color:#F2E240;font-style:italic;">  _outputProperties: null</span></div>
<div class="m" style="left:5px;top:192px;color:#6F7173;">487</div>
<div class="m" style="left:113px;top:192px;"><span style="color:#A9B7C6;">            </span><span style="color:#9876AA;">_indentNumber</span><span style="color:#CC7832;">, </span><span style="color:#9876AA;">_tfactory</span><span style="color:#A9B7C6;">)</span><span style="color:#CC7832;">;</span></div>
<div class="m" style="left:5px;top:214px;color:#6F7173;">488</div>
<div class="m" style="left:5px;top:236px;color:#6F7173;">489</div>
<div class="m" style="left:113px;top:236px;"><span style="color:#A9B7C6;">        </span><span style="color:#CC7832;">if </span><span style="color:#A9B7C6;">(</span><span style="color:#9876AA;">_uriResolver</span><span style="color:#A9B7C6;"> != </span><span style="color:#CC7832;">null</span><span style="color:#A9B7C6;">) {</span></div>
<div class="m" style="left:5px;top:258px;color:#6F7173;">490</div>
<div class="m" style="left:113px;top:258px;"><span style="color:#A9B7C6;">            transformer.setURIResolver(</span><span style="color:#9876AA;">_uriResolver</span><span style="color:#A9B7C6;">)</span><span style="color:#CC7832;">;</span></div>
<div class="m" style="left:5px;top:280px;color:#6F7173;">491</div>
<div class="m" style="left:113px;top:280px;"><span style="color:#A9B7C6;">        }</span></div>
<div class="m" style="left:5px;top:302px;color:#6F7173;">492</div>
<div class="m" style="left:5px;top:324px;color:#6F7173;">493</div>
<div class="m" style="left:113px;top:324px;"><span style="color:#A9B7C6;">        </span><span style="color:#CC7832;">if </span><span style="color:#A9B7C6;">(</span><span style="color:#9876AA;">_tfactory</span><span style="color:#A9B7C6;">.getFeature(XMLConstants.</span><span style="color:#9876AA;font-style:italic;">FEATURE_SECURE_PROCESSING</span><span style="color:#A9B7C6;">)) {</span></div>
<div class="m" style="left:5px;top:346px;color:#6F7173;">494</div>
<div class="m" style="left:113px;top:346px;"><span style="color:#A9B7C6;">            transformer.setSecureProcessing(</span><span style="color:#CC7832;">true</span><span style="color:#A9B7C6;">)</span><span style="color:#CC7832;">;</span></div>
<div class="m" style="left:5px;top:368px;color:#6F7173;">495</div>
<div class="m" style="left:113px;top:368px;"><span style="color:#A9B7C6;">        }</span></div>
<div class="m" style="left:5px;top:390px;color:#6F7173;">496</div>
<div class="m" style="left:113px;top:390px;"><span style="color:#A9B7C6;">        </span><span style="color:#CC7832;">return </span><span style="color:#A9B7C6;">transformer</span><span style="color:#CC7832;">;</span></div>
<div class="m" style="left:5px;top:412px;color:#6F7173;">497</div>
<div class="m" style="left:113px;top:412px;"><span style="color:#A9B7C6;">    }</span></div>
<div class="m" style="left:5px;top:434px;color:#6F7173;">498</div>
<div class="m" style="left:5px;top:456px;color:#6F7173;">499</div>
<div class="m" style="left:113px;top:456px;"><span style="color:#629755;font-style:italic;">    /**</span></div>
<div class="m" style="left:5px;top:478px;color:#6F7173;">500</div>
<div class="m" style="left:113px;top:478px;"><span style="color:#629755;font-style:italic;">     * Implements JAXP's Templates.getOutputProperties(). We need to</span></div>
</div>
<div style="position:absolute;left:795px;top:154px;width:1px;height:22px;background:#3B3B3B;"></div>
<div style="position:absolute;left:795px;top:198px;width:1px;height:286px;background:#3B3B3B;"></div>
<div style="position:absolute;left:823px;top:264px;width:1px;height:22px;background:#3B3B3B;"></div>
<div style="position:absolute;left:823px;top:330px;width:1px;height:22px;background:#3B3B3B;"></div>
<div style="position:absolute;left:823px;top:418px;width:1px;height:22px;background:#3B3B3B;"></div>
<svg style="position:absolute;left:752px;top:113px;" width="12" height="15" viewBox="0 0 12 15"><path d="M0.5 14.5 V5 L6 0.5 L11.5 5 V14.5 Z" fill="#313335" stroke="#6E6E6E"/><path d="M3 9 H9" stroke="#6E6E6E"/></svg>
<svg style="position:absolute;left:752px;top:182px;" width="12" height="15" viewBox="0 0 12 15"><path d="M0.5 0.5 V10 L6 14.5 L11.5 10 V0.5 Z" fill="#313335" stroke="#6E6E6E"/><path d="M3 6 H9" stroke="#6E6E6E"/></svg>
<svg style="position:absolute;left:752px;top:487px;" width="12" height="15" viewBox="0 0 12 15"><path d="M0.5 14.5 V5 L6 0.5 L11.5 5 V14.5 Z" fill="#313335" stroke="#6E6E6E"/><path d="M3 9 H9" stroke="#6E6E6E"/></svg>
<svg style="position:absolute;left:752px;top:534px;" width="12" height="15" viewBox="0 0 12 15"><path d="M0.5 0.5 V10 L6 14.5 L11.5 10 V0.5 Z" fill="#313335" stroke="#6E6E6E"/><path d="M3 6 H9" stroke="#6E6E6E"/></svg>
<svg style="position:absolute;left:685px;top:133px;" width="22" height="18" viewBox="0 0 22 18"><circle cx="6" cy="10" r="5.5" fill="#59A869"/><path d="M6 7 V13 M4.5 7 H7.5 M4.5 13 H7.5" stroke="#1E3A24" stroke-width="1"/><path d="M13.3 18 V4" stroke="#E0645A" stroke-width="1.2"/><path d="M10 4.6 L13.3 1.1 L16.6 4.6 Z" fill="#E0645A"/></svg>
<div class="t" style="left:706px;top:134.0px;color:#AFB1B3;font-size:16px;line-height:16px;font-weight:bold;">@</div>
<svg style="position:absolute;left:725px;top:134px;" width="16" height="16" viewBox="0 0 16 16"><path d="M8 1 L15 8 L8 15 L1 8 Z" stroke="#DB5C5C" stroke-width="1.8" fill="none"/></svg>
<svg style="position:absolute;left:1885px;top:77px;" width="11" height="9" viewBox="0 0 11 9"><path d="M1 4.5 L4 7.5 L10 1" stroke="#59A869" stroke-width="2" fill="none"/></svg>
<div style="position:absolute;left:1882px;top:467px;width:16px;height:1px;background:#A0563A;"></div>
<div style="position:absolute;left:1882px;top:503px;width:16px;height:1px;background:#A0563A;"></div>
<div style="position:absolute;left:1882px;top:507px;width:16px;height:1px;background:#A0563A;"></div>
<div style="position:absolute;left:1882px;top:556px;width:16px;height:1px;background:#A0563A;"></div>
<div style="position:absolute;left:1882px;top:530px;width:16px;height:1px;background:#A0563A;"></div>
<div style="position:absolute;left:1890px;top:516px;width:7px;height:33px;background:#AFB1B3;"></div>
<div style="position:absolute;left:652px;top:577px;width:1246px;height:23px;background:#323232;"></div>
<div style="position:absolute;left:652px;top:577px;width:1246px;height:1px;background:#2B2B2B;"></div>
<div class="t" style="left:767px;top:582.0px;color:#BBBBBB;font-size:13.3px;line-height:16px;">TemplatesImpl</div>
<div class="t" style="left:865px;top:582.0px;color:#8C8C8C;font-size:13px;line-height:16px;">›</div>
<div class="t" style="left:877px;top:582.0px;color:#BBBBBB;font-size:13px;line-height:16px;">newTransformer()</div>
<div style="position:absolute;left:1898px;top:50px;width:22px;height:922px;background:#3C3F41;"></div>
<div style="position:absolute;left:1898px;top:50px;width:1px;height:922px;background:#2B2B2B;"></div>
<svg style="position:absolute;left:1903px;top:61px;" width="12" height="12" viewBox="0 0 12 12"><circle cx="6" cy="3" r="2" fill="#AFB1B3"/><ellipse cx="6" cy="8" rx="3" ry="3.5" fill="#AFB1B3"/><path d="M1 5 L11 11 M11 5 L1 11 M0 8 H12" stroke="#AFB1B3" stroke-width="0.8"/></svg>
<div class="t" style="left:1900px;top:78px;width:16px;height:50px;font-size:12px;color:#BBBBBB;writing-mode:vertical-rl;line-height:16px;">Ant Build</div>
<div class="t" style="left:1900px;top:166px;width:16px;height:82px;font-size:12px;color:#BBBBBB;writing-mode:vertical-rl;line-height:16px;">Maven Projects</div>
<div class="t" style="left:1900px;top:287px;width:16px;height:49px;font-size:11.5px;color:#BBBBBB;writing-mode:vertical-rl;line-height:16px;">Database</div>
<div class="t" style="left:1900px;top:369px;width:16px;height:87px;font-size:12.5px;color:#BBBBBB;writing-mode:vertical-rl;line-height:16px;">Bean Validation</div>
<div class="t" style="left:1902px;top:145.0px;color:#AFB1B3;font-size:14px;line-height:16px;font-style:italic;font-weight:bold;">m</div>
<svg style="position:absolute;left:1903px;top:269px;" width="11" height="13" viewBox="0 0 11 13"><ellipse cx="5.5" cy="2.5" rx="5" ry="2.2" fill="#AFB1B3"/><path d="M0.5 4 V11 A5 2.2 0 0 0 10.5 11 V4" fill="#AFB1B3"/><path d="M0.5 6.5 A5 2 0 0 0 10.5 6.5 M0.5 9 A5 2 0 0 0 10.5 9" stroke="#3C3F41" stroke-width="0.8" fill="none"/></svg>
<svg style="position:absolute;left:1903px;top:357px;" width="12" height="13" viewBox="0 0 12 13"><path d="M1 8 L6 2 L9 5 L4 11 Z" fill="#E4A445"/><path d="M4 9 L7 12 L12 6" stroke="#4ECB4E" stroke-width="1.8" fill="none"/></svg>
<div style="position:absolute;left:22px;top:600px;width:1876px;height:1px;background:#2B2B2B;"></div>
<div style="position:absolute;left:22px;top:601px;width:934px;height:26px;background:#3C3F41;"></div>
<div class="t" style="left:29px;top:607.0px;color:#BBBBBB;font-size:13px;line-height:16px;">Debug:</div>
<div style="position:absolute;left:78px;top:601px;width:105px;height:26px;background:#333537;"></div>
<svg style="position:absolute;left:91px;top:605px;" width="16" height="16" viewBox="0 0 16 16"><rect x="0.5" y="0.5" width="11" height="9" fill="none" stroke="#9AA7B0"/><rect x="3" y="4" width="11" height="9" fill="#333537" stroke="#9AA7B0"/><rect x="4.5" y="6" width="8" height="5" fill="#40B6E0"/><circle cx="13.5" cy="13.5" r="2" fill="#4ECB4E"/></svg>
<div class="t" style="left:110px;top:607.0px;color:#BBBBBB;font-size:13px;line-height:16px;">vulApp1</div>
<svg style="position:absolute;left:163.75px;top:611.25px;" width="7.5" height="7.5" viewBox="0 0 7.5 7.5"><path d="M0.5 0.5 L7.0 7.0 M7.0 0.5 L0.5 7.0" stroke="#6E6E6E" stroke-width="1.2"/></svg>
<svg style="position:absolute;left:909px;top:608px;" width="13" height="13" viewBox="0 0 13 13"><path d="M5.08 0.16 L7.92 0.16 L8.03 1.94 L9.68 2.89 L11.28 2.10 L12.70 4.56 L11.22 5.55 L11.22 7.45 L12.70 8.44 L11.28 10.90 L9.68 10.11 L8.03 11.06 L7.92 12.84 L5.08 12.84 L4.97 11.06 L3.32 10.11 L1.72 10.90 L0.30 8.44 L1.78 7.45 L1.78 5.55 L0.30 4.56 L1.72 2.10 L3.32 2.89 L4.97 1.94 Z M8.84 6.50 A2.34 2.34 0 1 0 4.16 6.50 A2.34 2.34 0 1 0 8.84 6.50 Z" fill="#AFB1B3" fill-rule="evenodd"/></svg>
<div style="position:absolute;left:935px;top:613px;width:12px;height:2px;background:#AFB1B3;"></div>
<div style="position:absolute;left:22px;top:627px;width:934px;height:1px;background:#323232;"></div>
<div style="position:absolute;left:50px;top:628px;width:906px;height:27px;background:#3C3F41;"></div>
<div style="position:absolute;left:50px;top:655px;width:906px;height:3px;background:#4B4E50;"></div>
<div class="t" style="left:57px;top:632.5px;color:#BBBBBB;font-size:12px;line-height:16px;">Debugger</div>
<div style="position:absolute;left:113px;top:630px;width:1px;height:24px;background:#323232;"></div>
<svg style="position:absolute;left:120px;top:632px;" width="15" height="16" viewBox="0 0 15 16"><rect x="0" y="0" width="14" height="13" fill="#9AA7B0"/><rect x="1.5" y="3" width="11" height="8.5" fill="#3C3F41"/><path d="M3 5 H10 M3 7 H8 M3 9 H9" stroke="#40B6E0" stroke-width="1"/><circle cx="11" cy="12" r="3.5" fill="#E4A445"/><path d="M9.5 11 L11 13 L12.5 11" stroke="#3C3F41" stroke-width="0.9" fill="none"/></svg>
<div class="t" style="left:138px;top:632.5px;color:#BBBBBB;font-size:12px;line-height:16px;">Console</div>
<svg style="position:absolute;left:186px;top:636px;" width="13" height="9" viewBox="0 0 13 9"><path d="M0 5.5 H8" stroke="#8A8A8A" stroke-width="1.3"/><path d="M6 2.5 L9.5 5.5 L6 8.5" stroke="#8A8A8A" stroke-width="1.3" fill="none"/><rect x="10" y="0" width="3" height="3" fill="#AAAAAA"/></svg>
<div style="position:absolute;left:201px;top:628px;width:93px;height:26px;background:#4E5254;"></div>
<svg style="position:absolute;left:208px;top:634px;" width="13" height="12" viewBox="0 0 13 12"><rect x="0" y="0" width="12" height="3" fill="#D6A253"/><rect x="0" y="4.5" width="12" height="3" fill="#D6A253"/><rect x="0" y="9" width="12" height="3" fill="#D6A253"/></svg>
<div class="t" style="left:226px;top:632.5px;color:#BBBBBB;font-size:12px;line-height:16px;">Variables</div>
<svg style="position:absolute;left:279px;top:636px;" width="13" height="9" viewBox="0 0 13 9"><path d="M0 5.5 H8" stroke="#8A8A8A" stroke-width="1.3"/><path d="M6 2.5 L9.5 5.5 L6 8.5" stroke="#8A8A8A" stroke-width="1.3" fill="none"/><rect x="10" y="0" width="3" height="3" fill="#AAAAAA"/></svg>
<svg style="position:absolute;left:302px;top:634px;" width="13" height="12" viewBox="0 0 13 12"><path d="M0 1.5 H13 M0 10.5 H13" stroke="#D0D0D0" stroke-width="2"/><path d="M0 6 H13" stroke="#3592C4" stroke-width="2.4"/></svg>
<div style="position:absolute;left:324px;top:631px;width:1px;height:20px;background:#515355;"></div>
<svg style="position:absolute;left:334px;top:634px;" width="14" height="14" viewBox="0 0 14 14"><path d="M1 7 Q7 -1 12 5" stroke="#3592C4" stroke-width="1.6" fill="none"/><path d="M9 6 L13 6 L13 2 Z" fill="#3592C4"/><path d="M0 12.5 H14" stroke="#AFB1B3" stroke-width="2"/></svg>
<svg style="position:absolute;left:360px;top:634px;" width="13" height="14" viewBox="0 0 13 14"><path d="M6.5 0 V8" stroke="#3592C4" stroke-width="1.8"/><path d="M2.5 5 L6.5 9.5 L10.5 5 Z" fill="#3592C4"/><path d="M0 12.5 H13" stroke="#AFB1B3" stroke-width="2"/></svg>
<svg style="position:absolute;left:386px;top:634px;" width="13" height="14" viewBox="0 0 13 14"><path d="M6.5 0 V8" stroke="#DB5C5C" stroke-width="1.8"/><path d="M2.5 5 L6.5 9.5 L10.5 5 Z" fill="#DB5C5C"/><path d="M0 12.5 H13" stroke="#AFB1B3" stroke-width="2"/></svg>
<svg style="position:absolute;left:412px;top:634px;" width="13" height="14" viewBox="0 0 13 14"><path d="M6.5 10 V2" stroke="#3592C4" stroke-width="1.8"/><path d="M2.5 5 L6.5 0.5 L10.5 5 Z" fill="#3592C4"/><path d="M0 12.5 H13" stroke="#AFB1B3" stroke-width="2"/></svg>
<svg style="position:absolute;left:438px;top:634px;" width="13" height="14" viewBox="0 0 13 14"><path d="M1 1 L6 6 M6 1 L1 6" stroke="#DB5C5C" stroke-width="1.6"/><path d="M5 5 H12 V13 H4 V9" stroke="#AFB1B3" stroke-width="1.5" fill="none"/></svg>
<svg style="position:absolute;left:464px;top:634px;" width="15" height="16" viewBox="0 0 15 16"><path d="M1 1 L8 8" stroke="#3592C4" stroke-width="1.8"/><path d="M9 3 L9 9 L3 9 Z" fill="#3592C4"/><path d="M10 8 H14 M12 8 V15 M10 15 H14" stroke="#AFB1B3" stroke-width="1.2"/></svg>
<div style="position:absolute;left:487px;top:631px;width:1px;height:20px;background:#515355;"></div>
<svg style="position:absolute;left:497px;top:634px;" width="13" height="13" viewBox="0 0 13 13"><rect x="0.5" y="0.5" width="12" height="12" fill="none" stroke="#AFB1B3" stroke-width="1.2"/><path d="M0 4 H13 M0 8 H13 M4.5 4 V13 M8.5 4 V13" stroke="#AFB1B3" stroke-width="1"/><rect x="0" y="0" width="13" height="4" fill="#AFB1B3"/></svg>
<svg style="position:absolute;left:523px;top:634px;" width="14" height="12" viewBox="0 0 14 12"><path d="M0 1 H5 M8 1 H14 M0 6 H4 M9 6 H14 M0 11 H5 M8 11 H14 M5 0 L9 12" stroke="#6F7274" stroke-width="1.3"/></svg>
<svg style="position:absolute;left:933px;top:634px;" width="16" height="13" viewBox="0 0 16 13"><path d="M2 12 A6.5 6.5 0 1 1 14 8" stroke="#AFB1B3" stroke-width="1.8" fill="none"/><path d="M7 8 L11 4" stroke="#AFB1B3" stroke-width="1.5"/><path d="M9 13 L16 13 L16 6 Z" fill="#E8C428"/></svg>
<div style="position:absolute;left:22px;top:628px;width:28px;height:343px;background:#3C3F41;"></div>
<div style="position:absolute;left:49px;top:628px;width:1px;height:343px;background:#323232;"></div>
<div style="position:absolute;left:75px;top:658px;width:1px;height:313px;background:#323232;"></div>
<svg style="position:absolute;left:29px;top:634px;" width="14" height="15" viewBox="0 0 14 15"><path d="M10 3 A5.5 5.5 0 1 0 5 13" stroke="#59A869" stroke-width="2" fill="none"/><path d="M7 0 L13 3 L8 7 Z" fill="#59A869"/><rect x="8" y="9" width="6" height="6" fill="#AFB1B3"/></svg>
<div style="position:absolute;left:26px;top:659px;width:20px;height:1px;background:#555759;"></div>
<svg style="position:absolute;left:31px;top:669px;" width="12" height="12" viewBox="0 0 12 12"><rect x="0" y="0" width="3" height="12" fill="#59A869"/><path d="M5 0 L12 6 L5 12 Z" fill="#59A869"/></svg>
<svg style="position:absolute;left:31px;top:695px;" width="10" height="12" viewBox="0 0 10 12"><rect x="0" y="0" width="3" height="12" fill="#5C5F61"/><rect x="6" y="0" width="3" height="12" fill="#5C5F61"/></svg>
<div style="position:absolute;left:31px;top:723px;width:11px;height:11px;background:#DB5C5C;"></div>
<div style="position:absolute;left:26px;top:744px;width:20px;height:1px;background:#555759;"></div>
<svg style="position:absolute;left:29px;top:753px;" width="15" height="15" viewBox="0 0 15 15"><circle cx="10" cy="5" r="4.5" fill="#DB5C5C"/><circle cx="5" cy="10" r="4.5" fill="#DB5C5C" stroke="#3C3F41" stroke-width="1"/></svg>
<svg style="position:absolute;left:29px;top:780px;" width="14" height="14" viewBox="0 0 14 14"><circle cx="7" cy="7" r="6" fill="#C75450" opacity="0.85"/><path d="M1 13 L13 1" stroke="#AFB1B3" stroke-width="1.6"/></svg>
<div style="position:absolute;left:26px;top:803px;width:20px;height:1px;background:#555759;"></div>
<svg style="position:absolute;left:28px;top:814px;" width="16" height="13" viewBox="0 0 16 13"><path d="M0 3 H4 L6 0 H10 L12 3 H16 V13 H0 Z" fill="#AFB1B3"/><circle cx="8" cy="7.5" r="3" fill="#3C3F41"/><circle cx="8" cy="7.5" r="1.5" fill="#AFB1B3"/></svg>
<div style="position:absolute;left:26px;top:836px;width:20px;height:1px;background:#555759;"></div>
<svg style="position:absolute;left:30px;top:848px;" width="13" height="10" viewBox="0 0 13 10"><rect x="0" y="0" width="6" height="4" fill="#AFB1B3"/><rect x="7" y="0" width="6" height="4" fill="#AFB1B3"/><rect x="0" y="5" width="13" height="5" fill="#AFB1B3"/></svg>
<svg style="position:absolute;left:30px;top:872px;" width="13" height="13" viewBox="0 0 13 13"><path d="M5.08 0.16 L7.92 0.16 L8.03 1.94 L9.68 2.89 L11.28 2.10 L12.70 4.56 L11.22 5.55 L11.22 7.45 L12.70 8.44 L11.28 10.90 L9.68 10.11 L8.03 11.06 L7.92 12.84 L5.08 12.84 L4.97 11.06 L3.32 10.11 L1.72 10.90 L0.30 8.44 L1.78 7.45 L1.78 5.55 L0.30 4.56 L1.72 2.10 L3.32 2.89 L4.97 1.94 Z M8.84 6.50 A2.34 2.34 0 1 0 4.16 6.50 A2.34 2.34 0 1 0 8.84 6.50 Z" fill="#AFB1B3" fill-rule="evenodd"/></svg>
<svg style="position:absolute;left:40px;top:883px;" width="6" height="5" viewBox="0 0 6 5"><path d="M0 0 L6 0 L3 4 Z" fill="#DDDDDD"/></svg>
<div style="position:absolute;left:26px;top:896px;width:20px;height:1px;background:#555759;"></div>
<svg style="position:absolute;left:28px;top:905px;" width="15" height="15" viewBox="0 0 15 15"><path d="M8 1 L14 7 L11 8 L8 11 L7 8 Z" fill="#AFB1B3"/><path d="M7 8 L1 14" stroke="#AFB1B3" stroke-width="1.5"/></svg>
<svg style="position:absolute;left:57px;top:667px;" width="11" height="11" viewBox="0 0 11 11"><path d="M5.5 0 V11 M0 5.5 H11" stroke="#CCCCCC" stroke-width="1.8"/></svg>
<div style="position:absolute;left:58px;top:697px;width:10px;height:2px;background:#5C5F61;"></div>
<svg style="position:absolute;left:58px;top:721px;" width="10" height="7" viewBox="0 0 10 7"><path d="M0 7 L5 0 L10 7 Z" fill="#5C5F61"/></svg>
<svg style="position:absolute;left:58px;top:746px;" width="10" height="7" viewBox="0 0 10 7"><path d="M0 0 L10 0 L5 7 Z" fill="#5C5F61"/></svg>
<svg style="position:absolute;left:57px;top:769px;" width="13" height="13" viewBox="0 0 13 13"><rect x="0.5" y="0.5" width="8" height="9" fill="none" stroke="#5C5F61"/><rect x="3.5" y="3.5" width="9" height="9" fill="#3C3F41" stroke="#5C5F61"/><path d="M5.5 6.5 H10.5 M5.5 8.5 H10.5 M5.5 10.5 H10.5" stroke="#5C5F61"/></svg>
<div style="position:absolute;left:52px;top:791px;width:20px;height:20px;border:1px solid #6A6D6F;border-radius:3px;background:#4B4E50;"></div>
<svg style="position:absolute;left:55px;top:797px;" width="16" height="9" viewBox="0 0 16 9"><circle cx="4" cy="4.5" r="3.2" stroke="#CFCFCF" stroke-width="1.5" fill="none"/><circle cx="12" cy="4.5" r="3.2" stroke="#CFCFCF" stroke-width="1.5" fill="none"/><path d="M7 4.5 H9" stroke="#CFCFCF" stroke-width="1.5"/></svg>
<svg style="position:absolute;left:96px;top:665.0px;" width="16" height="9" viewBox="0 0 16 9"><circle cx="4" cy="4.5" r="3.2" stroke="#AFB1B3" stroke-width="1.5" fill="none"/><circle cx="12" cy="4.5" r="3.2" stroke="#AFB1B3" stroke-width="1.5" fill="none"/><path d="M7 4.5 H9" stroke="#AFB1B3" stroke-width="1.5"/></svg>
<div class="t" style="left:115px;top:661.5px;color:#BBBBBB;font-size:13px;line-height:16px;"><span style="color:#E57A6E;">_tfactory.getExternalExtensionsMap()</span><span style="color:#BBBBBB;"> = null</span></div>
<svg style="position:absolute;left:80px;top:685.5px;" width="9" height="10" viewBox="0 0 9 10"><path d="M0 0 L8 5 L0 10 Z" fill="#9E9E9E"/></svg>
<svg style="position:absolute;left:96px;top:686.0px;" width="16" height="9" viewBox="0 0 16 9"><circle cx="4" cy="4.5" r="3.2" stroke="#AFB1B3" stroke-width="1.5" fill="none"/><circle cx="12" cy="4.5" r="3.2" stroke="#AFB1B3" stroke-width="1.5" fill="none"/><path d="M7 4.5 H9" stroke="#AFB1B3" stroke-width="1.5"/></svg>
<div class="t" style="left:115px;top:682.5px;color:#BBBBBB;font-size:13px;line-height:16px;"><span style="color:#E57A6E;">ObjectFactory.findClassLoader()</span><span style="color:#BBBBBB;"> = </span><span style="color:#8C8C8C;">{Launcher$AppClassLoader@754}</span></div>
<svg style="position:absolute;left:80px;top:706.5px;" width="9" height="10" viewBox="0 0 9 10"><path d="M0 0 L8 5 L0 10 Z" fill="#9E9E9E"/></svg>
<svg style="position:absolute;left:98px;top:705.5px;" width="12" height="12" viewBox="0 0 12 12"><rect x="0" y="0" width="12" height="3" fill="#E4A445"/><rect x="0" y="4.5" width="12" height="3" fill="#E4A445"/><rect x="0" y="9" width="12" height="3" fill="#E4A445"/></svg>
<div class="t" style="left:115px;top:703.5px;color:#BBBBBB;font-size:13px;line-height:16px;"><span style="color:#E57A6E;">this</span><span style="color:#BBBBBB;"> = </span><span style="color:#8C8C8C;">{TemplatesImpl@710}</span></div>
<svg style="position:absolute;left:96px;top:728.0px;" width="16" height="9" viewBox="0 0 16 9"><circle cx="4" cy="4.5" r="3.2" stroke="#AFB1B3" stroke-width="1.5" fill="none"/><circle cx="12" cy="4.5" r="3.2" stroke="#AFB1B3" stroke-width="1.5" fill="none"/><path d="M7 4.5 H9" stroke="#AFB1B3" stroke-width="1.5"/></svg>
<div class="t" style="left:115px;top:724.5px;color:#BBBBBB;font-size:13px;line-height:16px;"><span style="color:#E57A6E;">_outputProperties</span><span style="color:#BBBBBB;"> = null</span></div>
<svg style="position:absolute;left:96px;top:749.0px;" width="16" height="9" viewBox="0 0 16 9"><circle cx="4" cy="4.5" r="3.2" stroke="#AFB1B3" stroke-width="1.5" fill="none"/><circle cx="12" cy="4.5" r="3.2" stroke="#AFB1B3" stroke-width="1.5" fill="none"/><path d="M7 4.5 H9" stroke="#AFB1B3" stroke-width="1.5"/></svg>
<div class="t" style="left:115px;top:745.5px;color:#BBBBBB;font-size:13px;line-height:16px;"><span style="color:#E57A6E;">_indentNumber</span><span style="color:#BBBBBB;"> = 0</span></div>
<svg style="position:absolute;left:96px;top:770.0px;" width="16" height="9" viewBox="0 0 16 9"><circle cx="4" cy="4.5" r="3.2" stroke="#AFB1B3" stroke-width="1.5" fill="none"/><circle cx="12" cy="4.5" r="3.2" stroke="#AFB1B3" stroke-width="1.5" fill="none"/><path d="M7 4.5 H9" stroke="#AFB1B3" stroke-width="1.5"/></svg>
<div class="t" style="left:115px;top:766.5px;color:#BBBBBB;font-size:13px;line-height:16px;"><span style="color:#E57A6E;">_uriResolver</span><span style="color:#BBBBBB;"> = null</span></div>
<svg style="position:absolute;left:80px;top:790.5px;" width="9" height="10" viewBox="0 0 9 10"><path d="M0 0 L8 5 L0 10 Z" fill="#9E9E9E"/></svg>
<svg style="position:absolute;left:96px;top:791.0px;" width="16" height="9" viewBox="0 0 16 9"><circle cx="4" cy="4.5" r="3.2" stroke="#AFB1B3" stroke-width="1.5" fill="none"/><circle cx="12" cy="4.5" r="3.2" stroke="#AFB1B3" stroke-width="1.5" fill="none"/><path d="M7 4.5 H9" stroke="#AFB1B3" stroke-width="1.5"/></svg>
<div class="t" style="left:115px;top:787.5px;color:#BBBBBB;font-size:13px;line-height:16px;"><span style="color:#E57A6E;">_tfactory</span><span style="color:#BBBBBB;"> = </span><span style="color:#8C8C8C;">{TransformerFactoryImpl@748}</span></div>
<div style="position:absolute;left:955px;top:601px;width:1px;height:370px;background:#2B2B2B;"></div>
<div style="position:absolute;left:956px;top:601px;width:942px;height:26px;background:#3C3F41;"></div>
<div class="t" style="left:963px;top:607.0px;color:#BBBBBB;font-size:13px;line-height:16px;">Event Log</div>
<svg style="position:absolute;left:1852px;top:608px;" width="13" height="13" viewBox="0 0 13 13"><path d="M5.08 0.16 L7.92 0.16 L8.03 1.94 L9.68 2.89 L11.28 2.10 L12.70 4.56 L11.22 5.55 L11.22 7.45 L12.70 8.44 L11.28 10.90 L9.68 10.11 L8.03 11.06 L7.92 12.84 L5.08 12.84 L4.97 11.06 L3.32 10.11 L1.72 10.90 L0.30 8.44 L1.78 7.45 L1.78 5.55 L0.30 4.56 L1.72 2.10 L3.32 2.89 L4.97 1.94 Z M8.84 6.50 A2.34 2.34 0 1 0 4.16 6.50 A2.34 2.34 0 1 0 8.84 6.50 Z" fill="#AFB1B3" fill-rule="evenodd"/></svg>
<div style="position:absolute;left:1878px;top:613px;width:12px;height:2px;background:#AFB1B3;"></div>
<div style="position:absolute;left:956px;top:627px;width:942px;height:1px;background:#323232;"></div>
<div style="position:absolute;left:956px;top:628px;width:28px;height:343px;background:#3C3F41;"></div>
<div style="position:absolute;left:984px;top:628px;width:914px;height:343px;background:#2B2B2B;"></div>
<svg style="position:absolute;left:964px;top:637px;" width="14" height="13" viewBox="0 0 14 13"><rect x="0.5" y="2.5" width="10" height="10" fill="none" stroke="#5C5F61" stroke-width="1.3"/><path d="M3 6 L6 9 L13 1" stroke="#5C5F61" stroke-width="1.6" fill="none"/></svg>
<svg style="position:absolute;left:965px;top:661px;" width="11" height="14" viewBox="0 0 11 14"><rect x="0" y="1" width="11" height="2" fill="#AFB1B3"/><rect x="4" y="0" width="3" height="2" fill="#AFB1B3"/><path d="M1 4 H10 L9.5 14 H1.5 Z" fill="#AFB1B3"/></svg>
<div style="position:absolute;left:960px;top:685px;width:20px;height:1px;background:#555555;"></div>
<svg style="position:absolute;left:963px;top:695px;" width="15" height="15" viewBox="0 0 15 15"><path d="M1.8 13.2 L7 8" stroke="#AFB1B3" stroke-width="2.6" stroke-linecap="round"/><path d="M5.2 9.5 A4.6 4.6 0 0 1 8.2 1.2 L8.2 4.6 L10.4 6.8 L13.8 6.8 A4.6 4.6 0 0 1 5.2 9.5 Z" fill="#AFB1B3"/></svg>
<div class="t" style="left:989px;top:629.0px;color:#BBBBBB;font-size:13.2px;line-height:16px;">2018/11/19</div>
<div class="t" style="left:989px;top:646.0px;color:#BBBBBB;font-size:13.15px;line-height:16px;">22:10<span style="color:#589DF6;text-decoration:underline;">Compilation completed successfully with 3 warnings in 5 s 211 ms</span></div>
<div class="t" style="left:989px;top:680.0px;color:#BBBBBB;font-size:13.25px;line-height:16px;">22:15All files are up-to-date</div>
<div class="t" style="left:989px;top:714.0px;color:#BBBBBB;font-size:13.25px;line-height:16px;">22:16All files are up-to-date</div>
<div class="t" style="left:989px;top:748.0px;color:#BBBBBB;font-size:13.25px;line-height:16px;">22:24All files are up-to-date</div>
<div class="t" style="left:989px;top:782.0px;color:#BBBBBB;font-size:13.25px;line-height:16px;">22:24All files are up-to-date</div>
<div class="t" style="left:989px;top:816.0px;color:#BBBBBB;font-size:13.25px;line-height:16px;">22:25All files are up-to-date</div>
<div style="position:absolute;left:0px;top:971px;width:1920px;height:1px;background:#323232;"></div>
<div style="position:absolute;left:0px;top:972px;width:1920px;height:22px;background:#3C3F41;"></div>
<div style="position:absolute;left:19px;top:972px;width:85px;height:21px;background:#2B2B2B;"></div>
<svg style="position:absolute;left:31px;top:977px;" width="14" height="14" viewBox="0 0 14 14"><ellipse cx="6" cy="8" rx="4.5" ry="5" fill="#AFB1B3"/><path d="M1 3 L3 5 M11 3 L9 5 M0 8 H2 M10 8 H12 M1 13 L3 11 M11 13 L9 11" stroke="#AFB1B3" stroke-width="1.3"/><circle cx="11.5" cy="12" r="2" fill="#4ECB4E"/></svg>
<div class="t" style="left:47px;top:975.0px;color:#DDDDDD;font-size:11.5px;line-height:16px;"><span class="u">5</span>: Debug</div>
<svg style="position:absolute;left:117px;top:977px;" width="11" height="10" viewBox="0 0 11 10"><path d="M0 1 H2 M0 4.5 H2 M0 8 H2 M3.5 1 H11 M3.5 4.5 H11 M3.5 8 H11" stroke="#AFB1B3" stroke-width="1.5"/></svg>
<div class="t" style="left:132px;top:975.0px;color:#BBBBBB;font-size:11px;line-height:16px;"><span class="u">6</span>: TODO</div>
<svg style="position:absolute;left:197px;top:977px;" width="13" height="11" viewBox="0 0 13 11"><path d="M1 10 Q0 2 12 0 Q12 9 3 10 Z" fill="#AFB1B3"/></svg>
<div class="t" style="left:214px;top:975.0px;color:#BBBBBB;font-size:11.5px;line-height:16px;">Spring</div>
<svg style="position:absolute;left:269px;top:977px;" width="12" height="11" viewBox="0 0 12 11"><rect x="0" y="0" width="12" height="11" fill="#AFB1B3"/><path d="M2 3 L5 5.5 L2 8 M6 8.5 H10" stroke="#3C3F41" stroke-width="1.2" fill="none"/></svg>
<div class="t" style="left:285px;top:975.0px;color:#BBBBBB;font-size:11.5px;line-height:16px;">Terminal</div>
<svg style="position:absolute;left:352px;top:977px;" width="13" height="11" viewBox="0 0 13 11"><rect x="0.5" y="0.5" width="12" height="10" fill="none" stroke="#AFB1B3"/><path d="M2.5 3 H5.5 M2.5 5.5 H5.5 M2.5 8 H5.5 M7.5 3 H10.5 M7.5 5.5 H10.5 M7.5 8 H10.5 M7.5 3 V8 M2.5 3 V8" stroke="#AFB1B3" stroke-width="1.2"/></svg>
<div class="t" style="left:369px;top:975.0px;color:#BBBBBB;font-size:11px;line-height:16px;">Java Enterprise</div>
<div style="position:absolute;left:1810px;top:972px;width:90px;height:21px;background:#2B2B2B;"></div>
<svg style="position:absolute;left:1821px;top:976px;" width="14" height="14" viewBox="0 0 14 14"><path d="M7 13 A6 6 0 1 1 13 7 V13 Z" stroke="#BBBBBB" stroke-width="1.3" fill="none"/></svg>
<div class="t" style="left:1838px;top:975.0px;color:#DDDDDD;font-size:11.5px;line-height:16px;">Event Log</div>
<div style="position:absolute;left:0px;top:993px;width:1920px;height:1px;background:#323232;"></div>
<div style="position:absolute;left:0px;top:994px;width:1920px;height:20px;background:#3C3F41;"></div>
<svg style="position:absolute;left:10px;top:998px;" width="13" height="13" viewBox="0 0 13 13"><rect x="0.5" y="3.5" width="9" height="9" fill="none" stroke="#AFB1B3"/><path d="M3.5 3.5 V0.5 H12.5 V9.5 H9.5" stroke="#AFB1B3" fill="none"/></svg>
<div class="t" style="left:31px;top:997.0px;color:#BBBBBB;font-size:13.3px;line-height:16px;">All files are up-to-date (6 minutes ago)</div>
<div class="t" style="left:1758px;top:997.0px;color:#BBBBBB;font-size:12px;line-height:16px;">486:1</div>
<div class="t" style="left:1803px;top:997.0px;color:#9A9A9A;font-size:12px;line-height:16px;">LF</div>
<div class="t" style="left:1829px;top:997.0px;color:#9A9A9A;font-size:12px;line-height:16px;">UTF-8</div>
<svg style="position:absolute;left:1877px;top:998px;" width="9" height="12" viewBox="0 0 9 12"><path d="M1.5 5 V3.5 A3 3 0 0 1 7.5 3.5 V5" stroke="#AFB1B3" stroke-width="1.5" fill="none"/><rect x="0" y="5" width="9" height="7" fill="#AFB1B3"/></svg>
<svg style="position:absolute;left:1899px;top:997px;" width="13" height="14" viewBox="0 0 13 14"><circle cx="6.5" cy="5" r="4.5" stroke="#8C8C8C" stroke-width="1.2" fill="none"/><path d="M1 7 H12 M4 10 V14 M9 10 V14" stroke="#8C8C8C" stroke-width="1.2"/></svg>
<div style="position:absolute;left:788px;top:37px;width:146px;height:35px;border:3px solid #F03434;"></div>
<div style="position:absolute;left:1012px;top:127px;width:124px;height:28px;border:3px solid #F03434;"></div>
<div style="position:absolute;left:1058px;top:234px;width:146px;height:34px;border:2px solid #F03434;"></div>
<svg style="position:absolute;left:0;top:0;" width="1920" height="300" viewBox="0 0 1920 300"><path d="M935.5 78.8 L1005.5 111.7 L1007.5 108.4 L1019 122.6 L999.9 121.7 L1001.7 119.4 L936.5 80.2 Z" fill="#F03434"/><path d="M1127.6 171.5 L1149.2 215 L1151.8 213 L1150.7 231.6 L1138.5 219.4 L1140.4 217.6 L1128.6 172 Z" fill="#F03434"/></svg>
</body></html>
